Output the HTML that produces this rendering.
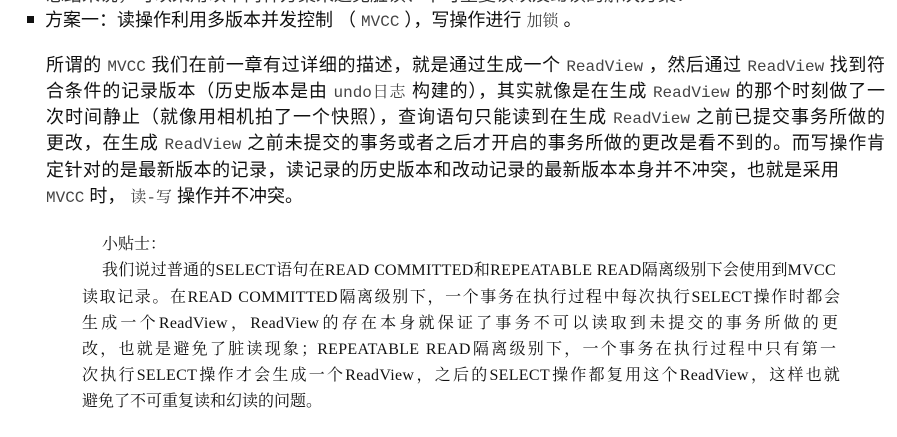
<!DOCTYPE html>
<html><head><meta charset="utf-8"><style>
body{margin:0;width:897px;height:437px;background:#fff;overflow:hidden;position:relative;font-family:"Liberation Sans","Noto Sans CJK SC",sans-serif;color:#111}
.l{position:absolute;white-space:nowrap;font-size:18px;line-height:26px;height:26px}
.j{text-align:justify;text-align-last:justify;white-space:normal;overflow:hidden}
code{font-family:"Liberation Mono","Noto Serif CJK SC",monospace;font-size:16px;color:#444}
.t{position:absolute;font-family:"Noto Serif CJK SC",serif;font-size:16px;line-height:26px;height:26px;color:#111;white-space:normal;text-align:justify;text-align-last:justify;overflow:hidden}
.t i{font-style:normal;font-family:"Liberation Serif",serif;font-size:16px;letter-spacing:0.3px}
</style></head><body>
<div class="l" style="left:46px;top:-18px;color:#333">总结来说，可以采用以下两种方案来避免脏读、不可重复读以及幻读的解决方案：</div>
<div style="position:absolute;left:27px;top:16px;width:7px;height:7px;background:#111"></div>
<div class="l" style="left:45px;top:7px">方案一：读操作利用多版本并发控制 （ <code>MVCC</code> ），写操作进行 <code>加锁</code> 。</div>
<div class="l j" style="left:46px;top:52px;width:839px">所谓的 <code>MVCC</code> 我们在前一章有过详细的描述，就是通过生成一个 <code>ReadView</code> ，然后通过 <code>ReadView</code> 找到符</div>
<div class="l j" style="left:46px;top:78px;width:839px">合条件的记录版本（历史版本是由 <code>undo日志</code> 构建的），其实就像是在生成 <code>ReadView</code> 的那个时刻做了一</div>
<div class="l j" style="left:46px;top:104px;width:839px">次时间静止（就像用相机拍了一个快照），查询语句只能读到在生成 <code>ReadView</code> 之前已提交事务所做的</div>
<div class="l j" style="left:46px;top:130px;width:839px">更改，在生成 <code>ReadView</code> 之前未提交的事务或者之后才开启的事务所做的更改是看不到的。而写操作肯</div>
<div class="l j" style="left:46px;top:157px;width:793px">定针对的是最新版本的记录，读记录的历史版本和改动记录的最新版本本身并不冲突，也就是采用</div>
<div class="l" style="left:46px;top:183px"> <code>MVCC</code> 时， <code>读-写</code> 操作并不冲突。</div>
<div class="t" style="left:102px;top:230px;white-space:nowrap;text-align:left;text-align-last:left">小贴士：</div>
<div class="t" style="left:102px;top:256px;width:734px">我们说过普通的<i>SELECT</i>语句在<i>READ COMMITTED</i>和<i>REPEATABLE READ</i>隔离级别下会使用到<i>MVCC</i></div>
<div class="t" style="left:82px;top:283px;width:758px">读取记录。在<i>READ COMMITTED</i>隔离级别下，一个事务在执行过程中每次执行<i>SELECT</i>操作时都会</div>
<div class="t" style="left:82px;top:309px;width:756px">生成一个<i>ReadView</i>，<i>ReadView</i>的存在本身就保证了事务不可以读取到未提交的事务所做的更</div>
<div class="t" style="left:82px;top:335px;width:754px">改，也就是避免了脏读现象；<i>REPEATABLE READ</i>隔离级别下，一个事务在执行过程中只有第一</div>
<div class="t" style="left:82px;top:361px;width:758px">次执行<i>SELECT</i>操作才会生成一个<i>ReadView</i>，之后的<i>SELECT</i>操作都复用这个<i>ReadView</i>，这样也就</div>
<div class="t" style="left:82px;top:387px;white-space:nowrap;text-align:left;text-align-last:left">避免了不可重复读和幻读的问题。</div>
</body></html>
